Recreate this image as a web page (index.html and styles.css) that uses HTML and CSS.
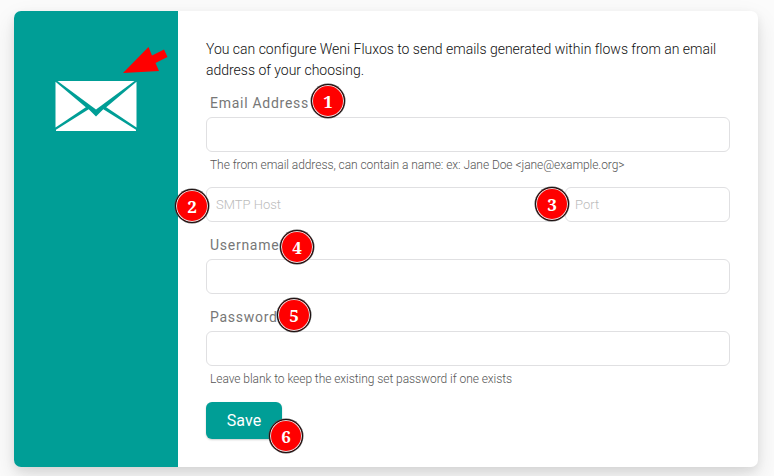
FILE: index.html
```html
<!DOCTYPE html>
<html lang="en">
<head>
<meta charset="utf-8">
<title>Email configuration</title>
<link rel="stylesheet" href="styles.css">
</head>
<body>
<main class="card">
  <aside class="side">
    <svg class="envelope" viewBox="0 0 82 50" width="82" height="50">
      <g fill="#fff">
        <path d="M2.500 0H79.500L41 28.500Z"/>
        <path d="M.5 .8L30.800 26.300L.5 46.500Z"/>
        <path d="M81.500 .8L51.200 26.300L81.500 46.500Z"/>
        <path d="M1 50V48.800L33.700 28.200L41 35.500L48.300 28.200L81 48.800V50Z"/>
      </g>
    </svg>
  </aside>
  <form class="content">
    <p class="intro">You can configure Weni Fluxos to send emails generated within flows from an email address of your choosing.</p>
    <label class="label" for="email">Email Address</label>
    <input class="field" id="email" type="text">
    <p class="help">The from email address, can contain a name: ex: Jane Doe &lt;jane@example.org&gt;</p>
    <div class="server">
      <input class="field" type="text" placeholder="SMTP Host">
      <input class="field" type="text" placeholder="Port">
    </div>
    <label class="label" for="username">Username</label>
    <input class="field" id="username" type="text">
    <label class="label" for="password">Password</label>
    <input class="field" id="password" type="password">
    <p class="help">Leave blank to keep the existing set password if one exists</p>
    <button class="save" type="button">Save</button>
  </form>
</main>
<svg class="pointer" viewBox="0 0 46 28" width="46" height="28"><path d="M1 27L26.500 1L30 9.500L42 3.500L45.500 11L33.500 17L37 25Z" fill="#f00"/></svg>
<span class="badge badge-1">1</span>
<span class="badge badge-2">2</span>
<span class="badge badge-3">3</span>
<span class="badge badge-4">4</span>
<span class="badge badge-5">5</span>
<span class="badge badge-6">6</span>
</body>
</html>
```
FILE: styles.css
```css
* { box-sizing: border-box; }

body {
  margin: 0;
  height: 476px;
  padding: 11px 16px 9px 14px;
  overflow: hidden;
  background: #fbfbfb;
  font-family: Roboto, "Liberation Sans", sans-serif;
}

.card {
  display: flex;
  height: 456px;
  border-radius: 7px;
  background: #fff;
  box-shadow: 0 10px 25px rgba(0, 0, 0, .1), 0 4px 10px rgba(0, 0, 0, .08);
}

.side {
  width: 164px;
  padding-top: 70px;
  border-radius: 7px 0 0 7px;
  background: #009e96;
}

.envelope { display: block; margin: 0 auto; }

.content {
  display: flex;
  flex: 1;
  flex-direction: column;
  padding: 28px 28px 0;
}

.intro {
  margin: 0;
  font-size: 14px;
  font-weight: 300;
  line-height: 21px;
  letter-spacing: -.01px;
  color: #111;
}

.label {
  height: 37px;
  padding: 15px 4px 0;
  font-size: 14px;
  line-height: 16px;
  letter-spacing: .73px;
  color: #777;
}

.intro + .label { height: 36px; padding-top: 14px; }

.field {
  width: 100%;
  height: 35px;
  padding: 0 9px;
  border: 1px solid #e0e0e2;
  border-radius: 6px;
  outline: 0;
  background: #fff;
  font: 300 13px Roboto, sans-serif;
}

.field::placeholder { color: #bbb; opacity: 1; }

.help {
  height: 35px;
  margin: 0;
  padding: 6px 4px 0;
  font-size: 12px;
  font-weight: 300;
  line-height: 15px;
  letter-spacing: -.06px;
  color: #555;
}

.server {
  display: grid;
  grid-template-columns: 349px 165px;
  gap: 10px;
}

.save {
  width: 76px;
  height: 37px;
  margin-top: 1px;
  padding: 0;
  border: 0;
  border-radius: 6px;
  background: #009e96;
  box-shadow: 0 1px 2px rgba(0, 0, 0, .2);
  color: #fff;
  font: 400 16px Roboto, sans-serif;
  letter-spacing: .1px;
}

.pointer { position: absolute; left: 122px; top: 46px; }

.badge {
  position: absolute;
  width: 34px;
  height: 34px;
  border: 1px solid #111;
  border-radius: 50%;
  background: #f00;
  box-shadow: inset 0 0 0 1px #ddd, 0 0 0 .5px #555;
  color: #fff;
  font: bold 17px/34px "Noto Serif", "DejaVu Serif", serif;
  text-align: center;
}

.badge-1 { left: 311px; top: 84px; }
.badge-2 { left: 175px; top: 189px; }
.badge-3 { left: 535px; top: 187px; }
.badge-4 { left: 280px; top: 230px; }
.badge-5 { left: 277px; top: 298px; }
.badge-6 { left: 269px; top: 419px; }
```
